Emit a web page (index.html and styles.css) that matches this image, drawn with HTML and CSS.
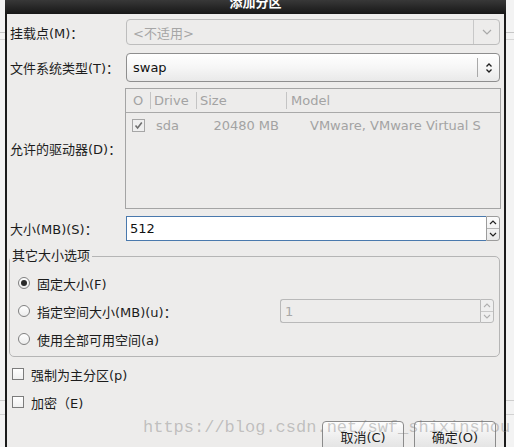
FILE: index.html
```html
<!DOCTYPE html>
<html lang="zh-CN">
<head>
<meta charset="utf-8">
<title>添加分区</title>
<link rel="stylesheet" href="styles.css">
</head>
<body>
<div class="window">
  <div class="titlebar"><span class="title">添加分区</span></div>
  <div class="dialog">
    <div class="row row-mount">
      <span class="label">挂载点(M)：</span>
      <div class="combo combo-disabled">
        <span class="combo-text">&lt;不适用&gt;</span>
        <span class="combo-btn">
          <svg width="10" height="6" viewBox="0 0 10 6"><path d="M1 1 L5 5 L9 1" fill="none" stroke="#a9a9a9" stroke-width="1.2"/></svg>
        </span>
      </div>
    </div>
    <div class="row row-fs">
      <span class="label">文件系统类型(T)：</span>
      <div class="combo combo-swap">
        <span class="combo-text">swap</span>
        <span class="combo-sep"></span>
        <span class="combo-arrows">
          <svg width="8" height="12" viewBox="0 0 8 12"><path d="M1.5 4.5 L4 2 L6.5 4.5 M1.5 7.5 L4 10 L6.5 7.5" fill="none" stroke="#1e1e1e" stroke-width="1.3"/></svg>
        </span>
      </div>
    </div>
    <div class="row row-drives">
      <span class="label">允许的驱动器(D)：</span>
      <div class="tree">
        <div class="tree-head">
          <span class="th th-check">O</span>
          <span class="th th-sep">Drive</span>
          <span class="th th-sep">Size</span>
          <span class="th th-sep th-model">Model</span>
        </div>
        <div class="tree-row">
          <span class="td td-check"><span class="tick">
            <svg width="9" height="9" viewBox="0 0 9 9"><path d="M1.5 4.5 L3.6 7 L7.8 1.5" fill="none" stroke="#6f6f6f" stroke-width="1.6"/></svg>
          </span></span>
          <span class="td td-drive">sda</span>
          <span class="td td-size">20480 MB</span>
          <span class="td td-model">VMware, VMware Virtual S</span>
        </div>
      </div>
    </div>
    <div class="row row-size">
      <span class="label">大小(MB)(S)：</span>
      <div class="spin spin-active">
        <span class="entry">512</span>
        <span class="spin-btns">
          <span class="spin-up"><svg width="8" height="5" viewBox="0 0 8 5"><path d="M1 4 L4 1 L7 4" fill="none" stroke="#222" stroke-width="1.2"/></svg></span>
          <span class="spin-down"><svg width="8" height="5" viewBox="0 0 8 5"><path d="M1 1 L4 4 L7 1" fill="none" stroke="#222" stroke-width="1.2"/></svg></span>
        </span>
      </div>
    </div>

    <fieldset class="frame">
      <legend class="frame-title">其它大小选项</legend>
      <div class="opt">
        <span class="radio radio-on"></span>
        <span class="opt-text">固定大小(F)</span>
      </div>
      <div class="opt">
        <span class="radio"></span>
        <span class="opt-text">指定空间大小(MB)(u)：</span>
        <div class="spin spin-disabled">
          <span class="entry">1</span>
          <span class="spin-btns">
            <span class="spin-up"><svg width="8" height="5" viewBox="0 0 8 5"><path d="M1 4 L4 1 L7 4" fill="none" stroke="#b0b0b0" stroke-width="1.1"/></svg></span>
            <span class="spin-down"><svg width="8" height="5" viewBox="0 0 8 5"><path d="M1 1 L4 4 L7 1" fill="none" stroke="#b0b0b0" stroke-width="1.1"/></svg></span>
          </span>
        </div>
      </div>
      <div class="opt">
        <span class="radio"></span>
        <span class="opt-text">使用全部可用空间(a)</span>
      </div>
    </fieldset>

    <div class="check-row check-first">
      <span class="checkbox"></span>
      <span class="opt-text">强制为主分区(p)</span>
    </div>
    <div class="check-row">
      <span class="checkbox"></span>
      <span class="opt-text">加密（E)</span>
    </div>

    <div class="buttons">
      <button class="btn">取消(C)</button>
      <button class="btn">确定(O)</button>
    </div>
  </div>
</div>
<div class="watermark">https://blog.csdn.net/swf_shixinshou</div>
</body>
</html>
```

FILE: styles.css
```css
* { box-sizing: border-box; }
html, body { margin: 0; padding: 0; }
body {
  width: 514px;
  height: 447px;
  overflow: hidden;
  position: relative;
  font-family: "DejaVu Sans", "Noto Sans CJK SC", sans-serif;
  font-size: 13px;
  color: #1c1c1c;
  background:
    linear-gradient(#c6c6c6, #c6c6c6) 0 32px / 100% 1px no-repeat,
    linear-gradient(#d6d6d6, #d6d6d6) 0 39px / 100% 1px no-repeat,
    linear-gradient(#cdcdcd, #cdcdcd) 0 400px / 100% 1px no-repeat,
    linear-gradient(#d2d2d2, #d2d2d2) 0 414px / 100% 1px no-repeat,
    #f3f3f3;
}

.window {
  margin-left: 5px;
  width: 501px;
}
.titlebar {
  height: 14px;
  background: linear-gradient(#383838, #171717);
  display: flex;
  justify-content: center;
  overflow: hidden;
}
.title {
  color: #ffffff;
  font-weight: bold;
  font-size: 13px;
  line-height: 14px;
  margin-top: -4px;
}
.dialog {
  height: 433px;
  overflow: hidden;
  background: #edeceb;
  border-left: 2px solid #1b1b1b;
  border-right: 2px solid #1b1b1b;
  padding: 5px 4px 0 2px;
  display: flex;
  flex-direction: column;
}

.row { display: flex; align-items: center; flex: none; }
.label {
  width: 117px;
  flex: none;
  padding-left: 1px;
  white-space: nowrap;
}
.row-mount { height: 26px; }
.row-fs { height: 29px; margin-top: 8px; }
.row-drives { height: 121px; margin-top: 6px; }
.row-size { height: 25px; margin-top: 7px; }

/* combos */
.combo {
  flex: 1;
  height: 100%;
  display: flex;
  align-items: center;
  border-radius: 4px;
}
.combo-text { flex: 1; padding-left: 6px; white-space: nowrap; }
.combo-disabled {
  border: 1px solid #bdbdbd;
  background: #edeceb;
  color: #a6a6a6;
}
.combo-btn {
  width: 26px;
  height: 100%;
  border-left: 1px solid #c8c8c8;
  display: flex;
  align-items: center;
  justify-content: center;
}
.combo-swap {
  border: 1px solid #8e8e8e;
  background: linear-gradient(#ffffff, #f6f6f6 50%, #e9e9e9);
  color: #111;
}
.combo-sep {
  width: 1px;
  height: 19px;
  background: #a9a9a9;
}
.combo-arrows {
  width: 21px;
  display: flex;
  align-items: center;
  justify-content: center;
}

/* tree */
.tree {
  flex: 1;
  height: 100%;
  margin: 0 -1px;
  border: 1px solid #a4a4a4;
  background: #edeceb;
  color: #a3a3a3;
  display: flex;
  flex-direction: column;
}
.tree-head, .tree-row {
  display: grid;
  grid-template-columns: 24px 46px 90px 1fr;
  align-items: center;
}
.tree-head {
  height: 24px;
  border-bottom: 1px solid #a9a9a9;
}
.th {
  height: 17px;
  line-height: 17px;
  white-space: nowrap;
}
.th-check { padding-left: 7px; }
.th-sep { border-left: 1px solid #c4c4c4; padding-left: 3px; }
.th-model { padding-left: 4px; }
.tree-row { height: 24px; }
.td { white-space: nowrap; overflow: hidden; }
.td-check { padding-left: 6px; display: flex; }
.tick {
  width: 13px;
  height: 13px;
  border: 1px solid #a6a6a6;
  background: #efefef;
  display: flex;
  align-items: center;
  justify-content: center;
}
.td-drive { padding-left: 6px; }
.td-size { text-align: right; padding-right: 7px; }
.td-model { padding-left: 24px; }

/* spin buttons */
.spin { display: flex; height: 100%; }
.spin-active { flex: 1; }
.entry {
  flex: 1;
  display: flex;
  align-items: center;
  white-space: nowrap;
}
.spin-active .entry {
  border: 1px solid #4a79ad;
  border-right: none;
  background: #ffffff;
  padding-left: 3px;
  color: #111;
}
.spin-btns {
  width: 14px;
  flex: none;
  display: flex;
  flex-direction: column;
  border: 1px solid #9c9c9c;
  border-radius: 0 3px 3px 0;
  background: linear-gradient(#fbfbfb, #e9e9e9);
}
.spin-up, .spin-down {
  flex: 1;
  display: flex;
  align-items: center;
  justify-content: center;
}
.spin-up { border-bottom: 1px solid #b4b4b4; }

/* frame */
.frame {
  margin: 7px 0 0 0;
  padding: 5px 0 3px 0;
  border: 1px solid #b5b5b5;
  border-radius: 5px;
  min-width: 0;
  flex: none;
}
.frame-title {
  padding: 0 2px;
  line-height: 16px;
  font-size: 13px;
}
.opt {
  height: 28px;
  display: flex;
  align-items: center;
  padding-left: 8px;
}
.opt-text { margin-left: 7px; white-space: nowrap; }
.radio {
  width: 12px;
  height: 12px;
  flex: none;
  border: 1px solid #808080;
  border-radius: 50%;
  background: linear-gradient(#ffffff, #ececec);
  display: flex;
  align-items: center;
  justify-content: center;
}
.radio-on::after {
  content: "";
  width: 6px;
  height: 6px;
  border-radius: 50%;
  background: #2a2a2a;
}
.spin-disabled {
  margin-left: auto;
  margin-right: 5px;
  width: 214px;
  height: 24px;
}
.spin-disabled .entry {
  border: 1px solid #b9b9b9;
  border-right: none;
  border-radius: 3px 0 0 3px;
  background: #edeceb;
  color: #a8a8a8;
  padding-left: 4px;
}
.spin-disabled .spin-btns {
  border-color: #bababa;
  background: #efefef;
}
.spin-disabled .spin-up { border-bottom-color: #c8c8c8; }

/* check rows */
.check-row {
  height: 28px;
  display: flex;
  align-items: center;
  padding-left: 3px;
  flex: none;
}
.check-first { margin-top: 3px; }
.checkbox {
  width: 12px;
  height: 12px;
  flex: none;
  border: 1px solid #7c7c7c;
  background: linear-gradient(#ffffff, #f0f0f0);
}

/* buttons */
.buttons {
  margin-top: 5px;
  display: flex;
  justify-content: flex-end;
  gap: 10px;
  padding-right: 4px;
  flex: none;
}
.btn {
  width: 82px;
  height: 30px;
  flex: none;
  border: 1px solid #8b8b8b;
  border-radius: 4px;
  background: linear-gradient(#fdfdfd, #ececec 60%, #e2e2e2);
  font-family: "DejaVu Sans", "Noto Sans CJK SC", sans-serif;
  font-size: 13px;
  color: #1c1c1c;
  padding: 0;
}

.watermark {
  position: absolute;
  left: 143px;
  top: 418px;
  font-family: "Liberation Mono", monospace;
  font-size: 17px;
  line-height: 20px;
  color: rgba(120, 120, 120, 0.4);
  white-space: nowrap;
  pointer-events: none;
}
```
